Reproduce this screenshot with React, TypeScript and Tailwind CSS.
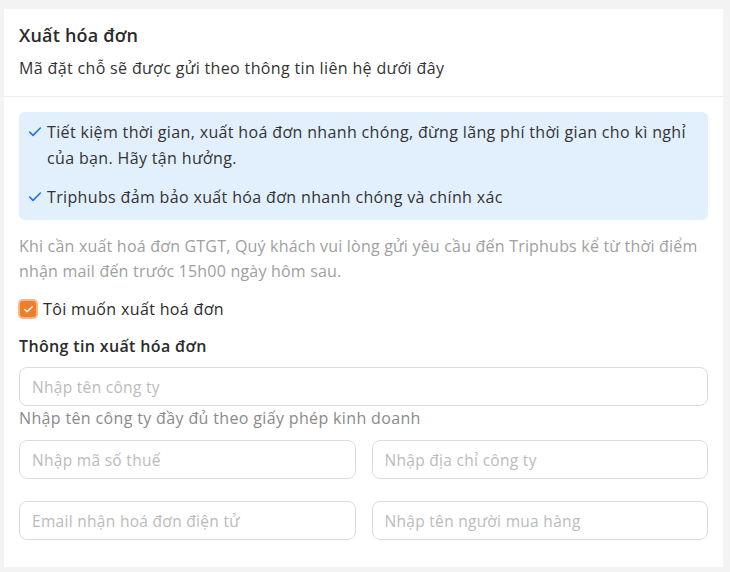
import { Check } from "lucide-react";

const inputClass =
  "h-[39px] w-full rounded-lg border border-[#dcdcdc] bg-white px-3 text-[15.5px] tracking-[0.3px] text-[#333] placeholder-[#bbbbbb] outline-none";

export default function App() {
  return (
    <div
      className="min-h-[572px] w-[730px] bg-[#f3f3f3] pl-1 pr-[7px] pt-[9px] pb-[6px] text-[#2b2b2b]"
      style={{ fontFamily: '"Open Sans", "Noto Sans", sans-serif' }}
    >
      <div className="bg-white">
        <div className="border-b border-[#ececec] px-[15px] pt-[14px] pb-[16px]">
          <h2 className="text-[18px] font-semibold leading-6 tracking-[0.2px] text-[#2b2b2b]">
            Xuất hóa đơn
          </h2>
          <p className="mt-[9px] text-[16px] leading-6 tracking-[0.35px] text-[#333]">
            Mã đặt chỗ sẽ được gửi theo thông tin liên hệ dưới đây
          </p>
        </div>

        <div className="px-[15px] pt-[15px] pb-[27px] text-[16px] tracking-[0.35px]">
          <div className="flex flex-col gap-[13px] rounded-md bg-[#e2effd] px-[8px] pt-[7px] pb-[10px] leading-[26px] text-[#333]">
            <div className="flex gap-[4px]">
              <Check className="mt-[5px] size-[16px] shrink-0 text-[#1a73e8]" strokeWidth={2.4} />
              <span>
                Tiết kiệm thời gian, xuất hoá đơn nhanh chóng, đừng lãng phí thời gian cho kì nghỉ
                của bạn. Hãy tận hưởng.
              </span>
            </div>
            <div className="flex gap-[4px]">
              <Check className="mt-[5px] size-[16px] shrink-0 text-[#1a73e8]" strokeWidth={2.4} />
              <span>Triphubs đảm bảo xuất hóa đơn nhanh chóng và chính xác</span>
            </div>
          </div>

          <p className="mt-[14px] leading-[25px] tracking-[0.2px] text-[#a0a0a0]">
            Khi cần xuất hoá đơn GTGT, Quý khách vui lòng gửi yêu cầu đến Triphubs kể từ thời điểm
            nhận mail đến trước 15h00 ngày hôm sau.
          </p>

          <label className="mt-[13px] flex items-center gap-[7px]">
            <span className="ml-[1px] flex size-[16px] items-center justify-center rounded-[3px] bg-[#f07d2a] ring-2 ring-[#fbb57f]">
              <Check className="size-[11px] text-white" strokeWidth={3} />
            </span>
            <span className="leading-6 text-[#2b2b2b]">Tôi muốn xuất hoá đơn</span>
          </label>

          <h3 className="mt-[13px] font-semibold leading-6 text-[#2b2b2b]">
            Thông tin xuất hóa đơn
          </h3>

          <div className="mt-[9px]">
            <input className={inputClass} placeholder="Nhập tên công ty" />
            <p className="leading-6 text-[#8a8a8a]">
              Nhập tên công ty đầy đủ theo giấy phép kinh doanh
            </p>
          </div>

          <div className="mt-[10px] grid grid-cols-2 gap-x-4 gap-y-[22px]">
            <input className={inputClass} placeholder="Nhập mã số thuế" />
            <input className={inputClass} placeholder="Nhập địa chỉ công ty" />
            <input className={inputClass} placeholder="Email nhận hoá đơn điện tử" />
            <input className={inputClass} placeholder="Nhập tên người mua hàng" />
          </div>
        </div>
      </div>
    </div>
  );
}
